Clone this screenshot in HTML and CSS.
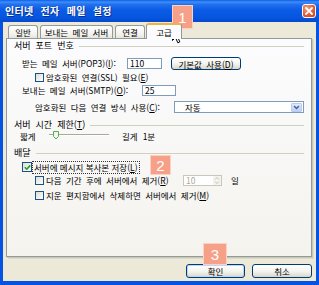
FILE: index.html
```html
<!DOCTYPE html>
<html lang="ko">
<head>
<meta charset="utf-8">
<link rel="stylesheet" href="styles.css">
</head>
<body>
<div class="window">
  <div class="titlebar">
    <span class="title">인터넷 전자 메일 설정</span>
    <span class="close"><svg width="8" height="8" viewBox="0 0 8 8"><path d="M1 1L7 7M7 1L1 7" stroke="#fff" stroke-width="1.8" stroke-linecap="square"/></svg></span>
  </div>
  <div class="frame">
    <div class="tabs">
      <span class="tab t1">일반</span>
      <span class="tab t2">보내는 메일 서버</span>
      <span class="tab t3">연결</span>
      <span class="tab active">고급</span>
    </div>
    <div class="panel">
      <div class="ghead g1"><span>서버 포트 번호</span><i class="rule"></i></div>
      <div class="row r-pop">
        <span class="lbl w-pop">받는 메일 서버(POP3)(<u>I</u>):</span>
        <span class="input in-pop">110</span>
        <span class="btn btn-def">기본값 사용(<u>D</u>)</span>
      </div>
      <div class="row ind r-ssl">
        <span class="cb"></span>
        <span>암호화된 연결(SSL) 필요(<u>E</u>)</span>
      </div>
      <div class="row r-smtp">
        <span class="lbl w-smtp">보내는 메일 서버(SMTP)(<u>O</u>):</span>
        <span class="input in-smtp">25</span>
      </div>
      <div class="row ind r-sel">
        <span class="lbl w-sel">암호화된 다음 연결 방식 사용(<u>C</u>):</span>
        <span class="select"><span>자동</span><span class="dd"><svg width="7" height="5" viewBox="0 0 7 5"><path d="M1 1L3.5 3.5L6 1" fill="none" stroke="#4D6185" stroke-width="1.5"/></svg></span></span>
      </div>
      <div class="ghead g2"><span>서버 시간 제한(<u>T</u>)</span><i class="rule"></i></div>
      <div class="row r-slide">
        <span class="lbl w-short">짧게</span>
        <svg class="slider" width="62" height="12" viewBox="0 0 62 12">
          <rect x="0" y="4" width="60" height="1" fill="#A9A79E"/>
          <rect x="0" y="5" width="60" height="1" fill="#FFFFFF"/>
          <path d="M4.5 1.5H9.5V6.5L7 9L4.5 6.5Z" fill="#F3F3EF" stroke="#53B14B" stroke-width="1"/>
        </svg>
        <span class="long">길게</span>
        <span class="min">1분</span>
      </div>
      <div class="ghead g3"><span>배달</span><i class="rule"></i></div>
      <div class="row r-chk">
        <span class="cb checked"><svg width="7" height="7" viewBox="0 0 7 7"><path d="M0.8 3.2L2.8 5.2L6.2 1.4" fill="none" stroke="#21A121" stroke-width="1.6"/></svg></span>
        <span class="focus">서버에 메시지 복사본 저장(<u>L</u>)</span>
      </div>
      <div class="row ind r-del">
        <span class="cb"></span>
        <span class="lbl w-del">다음 기간 후에 서버에서 제거(<u>R</u>)</span>
        <span class="spin"><span class="num">10</span><span class="arrows"><svg width="6" height="9" viewBox="0 0 6 9"><path d="M1 3.5L3 1.5L5 3.5M1 5.5L3 7.5L5 5.5" fill="none" stroke="#C2C0B4" stroke-width="1"/></svg></span></span>
        <span class="day">일</span>
      </div>
      <div class="row ind r-trash">
        <span class="cb"></span>
        <span>지운 편지함에서 삭제하면 서버에서 제거(<u>M</u>)</span>
      </div>
    </div>
    <div class="buttons">
      <span class="btn btn-ok">확인</span>
      <span class="btn btn-cancel">취소</span>
    </div>
  </div>

  <span class="badge b1">1</span>
  <span class="badge b2">2</span>
  <span class="badge b3">3</span>
  <svg class="cursor" width="11" height="17" viewBox="0 0 11 17"><path d="M0.5 0.5V13.5L3.5 10.5L5.8 15.8L7.8 14.9L5.6 9.8H9.8Z" fill="#fff" stroke="#000" stroke-width="1"/></svg>
</div>
</body>
</html>
```

FILE: styles.css
```css
* { box-sizing: border-box; }

body {
  margin: 0;
  background: #ffffff;
  font-family: "Noto Sans CJK KR", "Noto Sans", sans-serif;
  font-size: 8.5px;
  line-height: 1;
  color: #000;
  word-spacing: 2px;
}

u { text-decoration: underline; text-underline-offset: 1px; }

.window {
  width: 319px;
  height: 285px;
  display: flex;
  flex-direction: column;
  position: relative;
  overflow: hidden;
}

.titlebar {
  height: 22px;
  flex: none;
  display: flex;
  align-items: center;
  justify-content: space-between;
  padding: 0 3px 0 5px;
  background: linear-gradient(#0A5EEA 0%, #3D8FF7 9%, #2370EE 20%, #0A5BE6 45%, #0656DF 80%, #0648CC 100%);
}

.title {
  color: #fff;
  font-weight: bold;
  font-size: 10px;
  word-spacing: 4px;
  letter-spacing: 0.3px;
  text-shadow: 1px 1px 0 #0B2F8F;
}

.close {
  width: 14px;
  height: 14px;
  border: 1px solid #fff;
  border-radius: 3px;
  background: radial-gradient(circle at 35% 30%, #F0A184, #E2572E 60%, #C8421A);
  display: flex;
  align-items: center;
  justify-content: center;
}

.frame {
  flex: 1;
  display: flex;
  flex-direction: column;
  background: #ECE9D8;
  border-style: solid;
  border-color: #0553E2;
  border-width: 0 3px 4px 3px;
  padding: 0 4px 0 3px;
}

.tabs {
  height: 16px;
  flex: none;
  display: flex;
  align-items: flex-end;
  padding-left: 2px;
  gap: 2px;
  position: relative;
  z-index: 1;
}

.tab {
  height: 13px;
  border: 1px solid #919B9C;
  border-bottom: 0;
  border-radius: 3px 3px 0 0;
  background: linear-gradient(#FFFFFF, #F4F3EF 65%, #E6E4DC);
  font-size: 8.5px;
  word-spacing: 2px;
  display: flex;
  align-items: center;
  justify-content: center;
  padding-top: 1px;
}
.t1 { width: 30px; }
.t2 { width: 73px; }
.t3 { width: 30px; }
.tab.active {
  width: 36px;
  height: 16px;
  margin-left: -1px;
  margin-bottom: -1px;
  background: #FCFCFE;
  border-top: 2px solid #F2B241;
  padding-top: 0;
}

.panel {
  height: 219px;
  flex: none;
  border: 1px solid #919B9C;
  background: linear-gradient(#FCFCFE, #F4F3EE);
  padding: 0 7px;
  display: flex;
  flex-direction: column;
  box-shadow: 1px 1px 0 #C9C6B6, 2px 2px 0 #DEDBCB;
}

.ghead {
  display: flex;
  align-items: center;
  height: 12px;
  flex: none;
  font-size: 9px;
  word-spacing: 2.5px;
}
.ghead .rule {
  flex: 1;
  height: 1px;
  background: #D0D0BF;
  margin-left: 5px;
  margin-top: 3px;
}
.g2 { margin-top: 4px; }
.g3 { margin-top: 4px; }

.row {
  display: flex;
  align-items: center;
  flex: none;
  height: 12px;
  padding-left: 8px;
}
.row.ind { padding-left: 21px; }

.r-pop { height: 13px; margin-top: 6px; }
.r-ssl { margin-top: 1px; }
.r-smtp { height: 13px; margin-top: 1px; }
.r-sel { height: 14px; margin-top: 3px; }
.r-slide { padding-left: 6px; }
.r-chk { margin-top: 3px; }
.r-del { margin-top: 1px; }
.r-trash { margin-top: 3px; }

.lbl { flex: none; }
.w-pop { width: 105px; }
.w-smtp { width: 120px; }
.w-sel { width: 139px; }
.w-short { width: 29px; }
.w-del { width: 127px; }

.input {
  height: 11px;
  border: 1px solid #7F9DB9;
  background: #fff;
  padding-left: 2px;
  display: flex;
  align-items: center;
}
.in-pop { width: 35px; }
.in-smtp { width: 34px; }

.btn {
  border: 1px solid #003C74;
  border-radius: 3px;
  background: linear-gradient(#FFFFFF, #F3F3EE 55%, #D9D5C9);
  display: flex;
  align-items: center;
  justify-content: center;
  padding-top: 1px;
}
.btn-def { width: 70px; height: 13px; margin-left: 9px; }

.select {
  width: 132px;
  height: 12px;
  border: 1px solid #7F9DB9;
  background: #fff;
  display: flex;
  align-items: center;
  justify-content: space-between;
  padding: 0 1px 0 10px;
}
.dd {
  width: 11px;
  height: 9px;
  border-radius: 1px;
  background: linear-gradient(#E1EAFE, #BCCFF9);
  border: 1px solid #B9CBF3;
  display: flex;
  align-items: center;
  justify-content: center;
}

.slider { flex: none; }
.long { margin-left: 11px; }
.min { margin-left: 5px; }

.cb {
  width: 9px;
  height: 9px;
  flex: none;
  border: 1px solid #1C5180;
  background: linear-gradient(135deg, #DCDCD7, #FFFFFF);
  margin-right: 2px;
  display: flex;
  align-items: center;
  justify-content: center;
}
.cb.checked { width: 10px; height: 10px; margin-right: 1px; }

.focus {
  outline: 1px dotted #333;
  padding: 0 1px;
  height: 11px;
  display: flex;
  align-items: center;
  word-spacing: 0;
}

.spin {
  width: 39px;
  height: 11px;
  flex: none;
  border: 1px solid #C9C7BA;
  background: #fff;
  color: #ACA899;
  display: flex;
  align-items: center;
  justify-content: space-between;
  padding-left: 2px;
  margin-left: 10px;
}
.arrows {
  width: 8px;
  height: 9px;
  background: #F4F3EE;
  display: flex;
  align-items: center;
  justify-content: center;
}
.day { margin-left: 9px; }

.buttons {
  display: flex;
  justify-content: flex-end;
  gap: 7px;
  margin-top: 7px;
}
.btn-ok { width: 59px; height: 14px; box-shadow: inset 0 0 0 1px #BCD4F6; }
.btn-cancel { width: 60px; height: 14px; }

.badge {
  position: absolute;
  background: #F6A088;
  border: 1px solid #FCD0C2;
  color: #fff;
  font-family: "Liberation Sans", Arial, sans-serif;
  font-size: 15px;
  display: flex;
  align-items: center;
  justify-content: center;
}
.b1 { left: 172px; top: 5px; width: 21px; height: 24px; }
.b2 { left: 150px; top: 155px; width: 21px; height: 20px; }
.b3 { left: 203px; top: 243px; width: 24px; height: 22px; }

.cursor { position: absolute; left: 172px; top: 27px; }
```
